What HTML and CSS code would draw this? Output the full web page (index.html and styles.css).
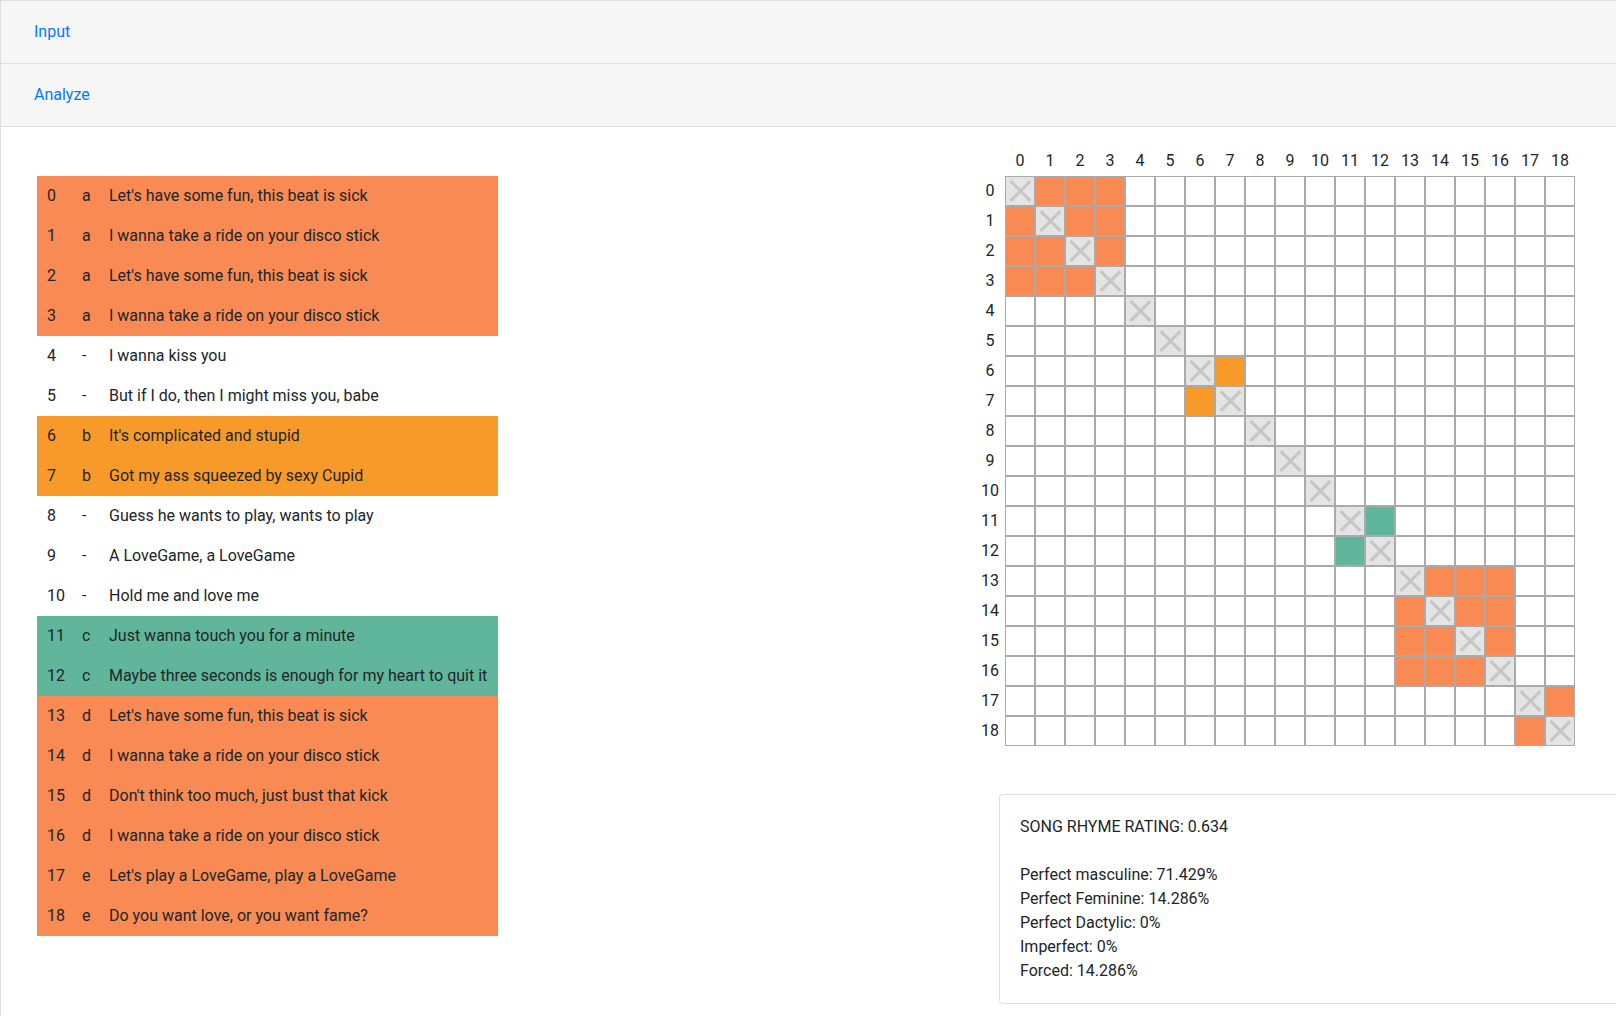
FILE: index.html
```html
<!DOCTYPE html>
<html lang="en">
<head>
<meta charset="utf-8">
<title>Song rhyme analysis</title>
<link rel="stylesheet" href="styles.css">
</head>
<body>
<div class="accordion">
  <div class="card-header"><a class="btn-link" href="#">Input</a></div>
  <div class="card-header"><a class="btn-link" href="#">Analyze</a></div>
  <div class="card-body">
    <div class="lines">
      <div class="line g-o"><span>0</span><span>a</span><span>Let's have some fun, this beat is sick</span></div>
      <div class="line g-o"><span>1</span><span>a</span><span>I wanna take a ride on your disco stick</span></div>
      <div class="line g-o"><span>2</span><span>a</span><span>Let's have some fun, this beat is sick</span></div>
      <div class="line g-o"><span>3</span><span>a</span><span>I wanna take a ride on your disco stick</span></div>
      <div class="line"><span>4</span><span>-</span><span>I wanna kiss you</span></div>
      <div class="line"><span>5</span><span>-</span><span>But if I do, then I might miss you, babe</span></div>
      <div class="line g-a"><span>6</span><span>b</span><span>It's complicated and stupid</span></div>
      <div class="line g-a"><span>7</span><span>b</span><span>Got my ass squeezed by sexy Cupid</span></div>
      <div class="line"><span>8</span><span>-</span><span>Guess he wants to play, wants to play</span></div>
      <div class="line"><span>9</span><span>-</span><span>A LoveGame, a LoveGame</span></div>
      <div class="line"><span>10</span><span>-</span><span>Hold me and love me</span></div>
      <div class="line g-g"><span>11</span><span>c</span><span>Just wanna touch you for a minute</span></div>
      <div class="line g-g"><span>12</span><span>c</span><span>Maybe three seconds is enough for my heart to quit it</span></div>
      <div class="line g-o"><span>13</span><span>d</span><span>Let's have some fun, this beat is sick</span></div>
      <div class="line g-o"><span>14</span><span>d</span><span>I wanna take a ride on your disco stick</span></div>
      <div class="line g-o"><span>15</span><span>d</span><span>Don't think too much, just bust that kick</span></div>
      <div class="line g-o"><span>16</span><span>d</span><span>I wanna take a ride on your disco stick</span></div>
      <div class="line g-o"><span>17</span><span>e</span><span>Let's play a LoveGame, play a LoveGame</span></div>
      <div class="line g-o"><span>18</span><span>e</span><span>Do you want love, or you want fame?</span></div>
    </div>
    <div class="side">
      <table class="matrix">
        <thead>
          <tr><th></th><th>0</th><th>1</th><th>2</th><th>3</th><th>4</th><th>5</th><th>6</th><th>7</th><th>8</th><th>9</th><th>10</th><th>11</th><th>12</th><th>13</th><th>14</th><th>15</th><th>16</th><th>17</th><th>18</th></tr>
        </thead>
        <tbody>
          <tr><th>0</th><td class="x"></td><td class="o"></td><td class="o"></td><td class="o"></td><td></td><td></td><td></td><td></td><td></td><td></td><td></td><td></td><td></td><td></td><td></td><td></td><td></td><td></td><td></td></tr>
          <tr><th>1</th><td class="o"></td><td class="x"></td><td class="o"></td><td class="o"></td><td></td><td></td><td></td><td></td><td></td><td></td><td></td><td></td><td></td><td></td><td></td><td></td><td></td><td></td><td></td></tr>
          <tr><th>2</th><td class="o"></td><td class="o"></td><td class="x"></td><td class="o"></td><td></td><td></td><td></td><td></td><td></td><td></td><td></td><td></td><td></td><td></td><td></td><td></td><td></td><td></td><td></td></tr>
          <tr><th>3</th><td class="o"></td><td class="o"></td><td class="o"></td><td class="x"></td><td></td><td></td><td></td><td></td><td></td><td></td><td></td><td></td><td></td><td></td><td></td><td></td><td></td><td></td><td></td></tr>
          <tr><th>4</th><td></td><td></td><td></td><td></td><td class="x"></td><td></td><td></td><td></td><td></td><td></td><td></td><td></td><td></td><td></td><td></td><td></td><td></td><td></td><td></td></tr>
          <tr><th>5</th><td></td><td></td><td></td><td></td><td></td><td class="x"></td><td></td><td></td><td></td><td></td><td></td><td></td><td></td><td></td><td></td><td></td><td></td><td></td><td></td></tr>
          <tr><th>6</th><td></td><td></td><td></td><td></td><td></td><td></td><td class="x"></td><td class="a"></td><td></td><td></td><td></td><td></td><td></td><td></td><td></td><td></td><td></td><td></td><td></td></tr>
          <tr><th>7</th><td></td><td></td><td></td><td></td><td></td><td></td><td class="a"></td><td class="x"></td><td></td><td></td><td></td><td></td><td></td><td></td><td></td><td></td><td></td><td></td><td></td></tr>
          <tr><th>8</th><td></td><td></td><td></td><td></td><td></td><td></td><td></td><td></td><td class="x"></td><td></td><td></td><td></td><td></td><td></td><td></td><td></td><td></td><td></td><td></td></tr>
          <tr><th>9</th><td></td><td></td><td></td><td></td><td></td><td></td><td></td><td></td><td></td><td class="x"></td><td></td><td></td><td></td><td></td><td></td><td></td><td></td><td></td><td></td></tr>
          <tr><th>10</th><td></td><td></td><td></td><td></td><td></td><td></td><td></td><td></td><td></td><td></td><td class="x"></td><td></td><td></td><td></td><td></td><td></td><td></td><td></td><td></td></tr>
          <tr><th>11</th><td></td><td></td><td></td><td></td><td></td><td></td><td></td><td></td><td></td><td></td><td></td><td class="x"></td><td class="g"></td><td></td><td></td><td></td><td></td><td></td><td></td></tr>
          <tr><th>12</th><td></td><td></td><td></td><td></td><td></td><td></td><td></td><td></td><td></td><td></td><td></td><td class="g"></td><td class="x"></td><td></td><td></td><td></td><td></td><td></td><td></td></tr>
          <tr><th>13</th><td></td><td></td><td></td><td></td><td></td><td></td><td></td><td></td><td></td><td></td><td></td><td></td><td></td><td class="x"></td><td class="o"></td><td class="o"></td><td class="o"></td><td></td><td></td></tr>
          <tr><th>14</th><td></td><td></td><td></td><td></td><td></td><td></td><td></td><td></td><td></td><td></td><td></td><td></td><td></td><td class="o"></td><td class="x"></td><td class="o"></td><td class="o"></td><td></td><td></td></tr>
          <tr><th>15</th><td></td><td></td><td></td><td></td><td></td><td></td><td></td><td></td><td></td><td></td><td></td><td></td><td></td><td class="o"></td><td class="o"></td><td class="x"></td><td class="o"></td><td></td><td></td></tr>
          <tr><th>16</th><td></td><td></td><td></td><td></td><td></td><td></td><td></td><td></td><td></td><td></td><td></td><td></td><td></td><td class="o"></td><td class="o"></td><td class="o"></td><td class="x"></td><td></td><td></td></tr>
          <tr><th>17</th><td></td><td></td><td></td><td></td><td></td><td></td><td></td><td></td><td></td><td></td><td></td><td></td><td></td><td></td><td></td><td></td><td></td><td class="x"></td><td class="o"></td></tr>
          <tr><th>18</th><td></td><td></td><td></td><td></td><td></td><td></td><td></td><td></td><td></td><td></td><td></td><td></td><td></td><td></td><td></td><td></td><td></td><td class="o"></td><td class="x"></td></tr>
        </tbody>
      </table>
      <div class="rating">
        <p class="rating-title">SONG RHYME RATING: 0.634</p>
        <p>Perfect masculine: 71.429%</p>
        <p>Perfect Feminine: 14.286%</p>
        <p>Perfect Dactylic: 0%</p>
        <p>Imperfect: 0%</p>
        <p>Forced: 14.286%</p>
      </div>
    </div>
  </div>
</div>
</body>
</html>
```
FILE: styles.css
```css
html, body {
  margin: 0;
  overflow: hidden;
}
body {
  font-family: Roboto, "Liberation Sans", sans-serif;
  font-size: 16px;
  line-height: 24px;
  color: #212529;
  background: #fff;
}
.accordion {
  width: calc(100% + 40px);
  min-height: 100vh;
  box-sizing: border-box;
  border-top: 1px solid #dfdfdf;
  border-left: 1px solid #dfdfdf;
}
.card-header {
  height: 62px;
  display: flex;
  align-items: center;
  padding-left: 33px;
  background: #f7f7f7;
  border-bottom: 1px solid #dfdfdf;
}
.btn-link {
  color: #007bff;
  text-decoration: none;
}
.card-body {
  display: flex;
  align-items: flex-start;
  padding: 19px 0 0 36px;
}
.lines {
  width: 461px;
  margin-top: 30px;
}
.line {
  display: grid;
  grid-template-columns: 35px 26px 1fr;
  height: 40px;
  align-items: center;
}
.line span {
  padding-left: 10px;
  white-space: nowrap;
}
.line span:last-child {
  padding-left: 11px;
}
.g-o { background: #f98a53; }
.g-a { background: #f89a2a; }
.g-g { background: #60b69b; }
.side {
  margin-left: 477px;
  flex: 1;
}
.matrix {
  border-spacing: 0;
  border-collapse: separate;
}
.matrix th {
  width: 30px;
  height: 29px;
  padding: 0;
  font-weight: 400;
  text-align: center;
  vertical-align: middle;
}
.matrix thead th {
  height: 30px;
}
.matrix td {
  width: 28px;
  height: 28px;
  padding: 0;
  border: 1px solid #aaa;
  background: #fff;
}
.matrix td.o { background: #f98a53; }
.matrix td.a { background: #f89a2a; }
.matrix td.g { background: #60b69b; }
.matrix td.x {
  position: relative;
  background: #e4e4e4;
}
.matrix td.x::before,
.matrix td.x::after {
  content: "";
  position: absolute;
  left: 12.5px;
  top: 0;
  width: 3px;
  height: 28px;
  background: #c6c6c6;
  transform: rotate(45deg);
}
.matrix td.x::after {
  transform: rotate(-45deg);
}
.rating {
  margin: 48px 0 0 24px;
  padding: 20px 20px;
  border: 1px solid #dfdfdf;
  border-radius: 4px;
}
.rating p {
  margin: 0;
}
.rating .rating-title {
  margin-bottom: 24px;
}
```
